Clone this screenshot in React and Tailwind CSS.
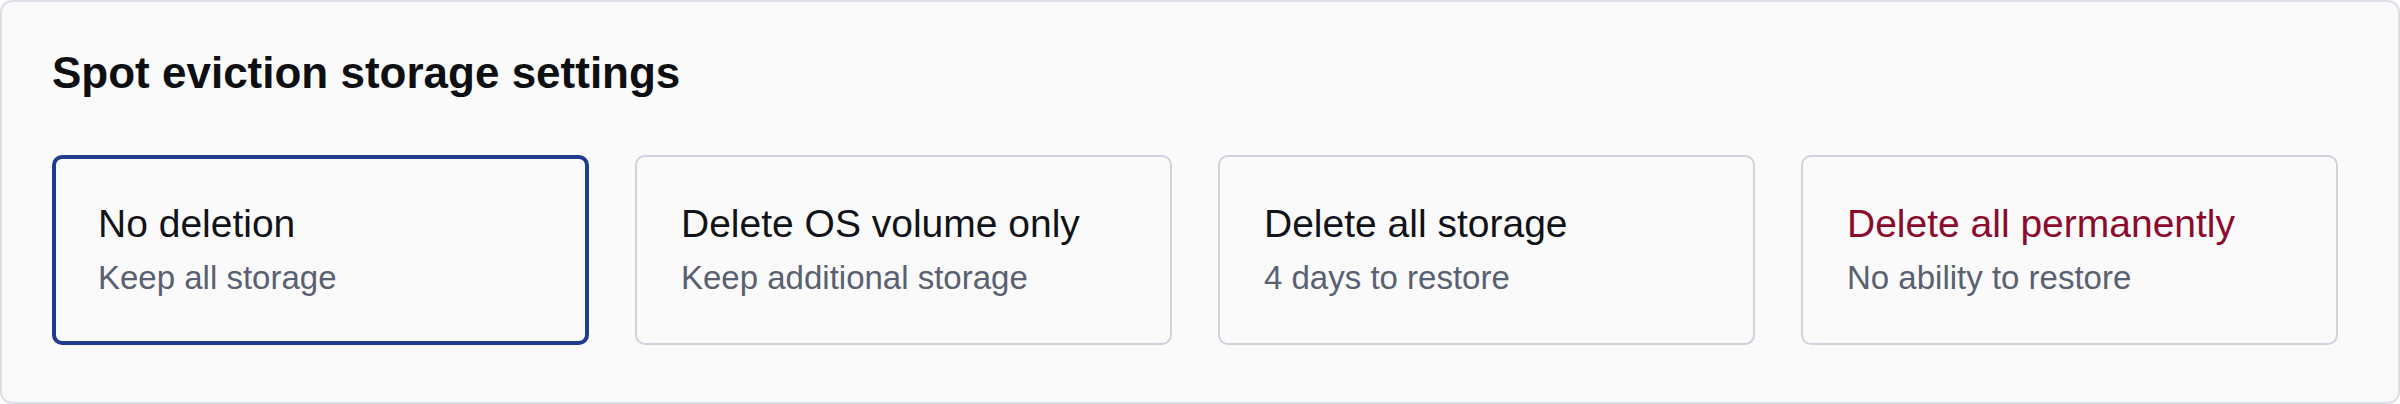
import React, { useState } from "react";

const options = [
  { id: "none", title: "No deletion", subtitle: "Keep all storage" },
  { id: "os", title: "Delete OS volume only", subtitle: "Keep additional storage" },
  { id: "all", title: "Delete all storage", subtitle: "4 days to restore" },
  { id: "permanent", title: "Delete all permanently", subtitle: "No ability to restore", danger: true },
];

const OptionCard = ({ option, selected, onSelect }) => {
  return (
    <button
      type="button"
      onClick={() => onSelect(option.id)}
      className={
        selected
          ? "flex flex-col items-start text-left rounded-[10px] border-4 border-[#1f3d8a] bg-[#fafafb] pl-[42px] pr-[40px] pt-[42px] pb-[43px]"
          : "flex flex-col items-start text-left rounded-[10px] border-2 border-[#cdd2dc] bg-[#fafafb] pl-[44px] pr-[42px] pt-[44px] pb-[45px]"
      }
    >
      <span
        className={
          option.danger
            ? "text-[39px] leading-[46px] text-[#8c0b2d]"
            : "text-[39px] leading-[46px] text-[#111318]"
        }
      >
        {option.title}
      </span>
      <span className="mt-[11px] text-[33px] leading-[40px] text-[#596170]">{option.subtitle}</span>
    </button>
  );
};

const App = () => {
  const [selected, setSelected] = useState("none");

  return (
    <div
      className="w-[2400px] h-[404px] rounded-[12px] border-2 border-[#dcdfe5] bg-[#fafafb] pl-[50px] pr-[60px] pt-[45px] pb-[56px]"
      style={{ fontFamily: '"Liberation Sans", Arial, sans-serif' }}
    >
      <h2 className="text-[44px] leading-[52px] font-bold text-[#0d0f12]">Spot eviction storage settings</h2>

      {/* Options */}
      <div className="mt-[56px] grid grid-cols-4 gap-[46px]">
        {options.map((option) => (
          <OptionCard
            key={option.id}
            option={option}
            selected={selected === option.id}
            onSelect={setSelected}
          />
        ))}
      </div>
    </div>
  );
};

export default App;
